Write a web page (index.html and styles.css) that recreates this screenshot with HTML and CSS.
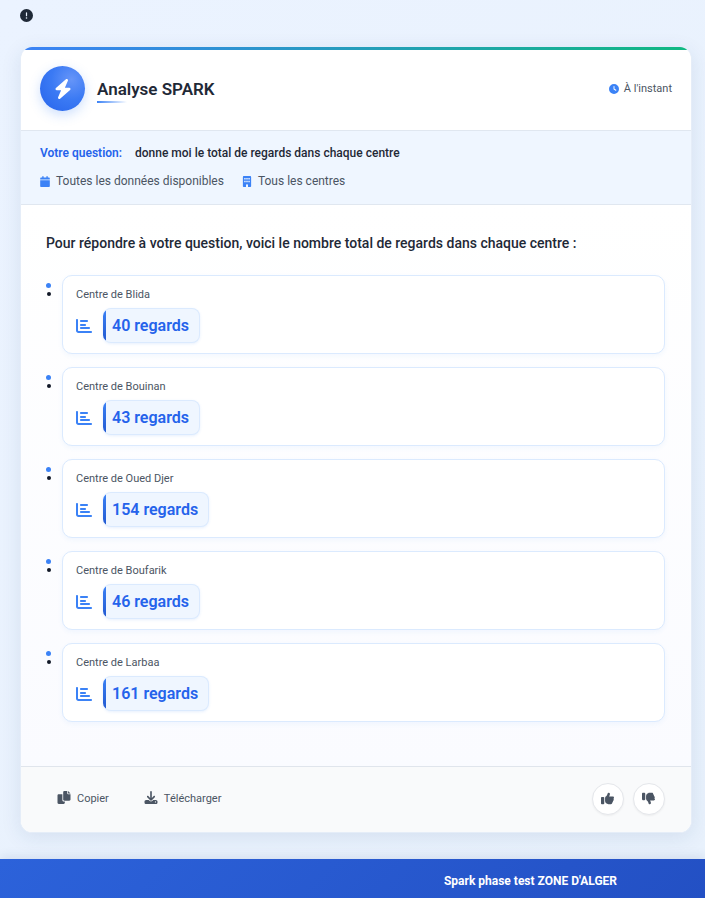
FILE: index.html
```
<!DOCTYPE html>
<html lang="fr">
<head>
<meta charset="utf-8">
<meta name="viewport" content="width=device-width, initial-scale=1">
<title>Analyse SPARK</title>
<link rel="stylesheet" href="styles.css">
</head>
<body>
<svg class="sprite" aria-hidden="true">
  <symbol id="bars" viewBox="0 0 512 512"><path d="M32 32c17.7 0 32 14.3 32 32V400c0 8.800 7.200 16 16 16H480c17.700 0 32 14.300 32 32s-14.300 32-32 32H80c-44.200 0-80-35.800-80-80V64C0 46.300 14.300 32 32 32zm96 64c0-17.700 14.300-32 32-32H352c17.700 0 32 14.300 32 32s-14.300 32-32 32H160c-17.700 0-32-14.300-32-32zm32 96H288c17.700 0 32 14.300 32 32s-14.300 32-32 32H160c-17.700 0-32-14.300-32-32s14.300-32 32-32zm0 96H416c17.700 0 32 14.300 32 32s-14.300 32-32 32H160c-17.700 0-32-14.300-32-32s14.300-32 32-32z"/></symbol>
  <symbol id="thumb" viewBox="0 0 512 512"><path d="M313.4 32.9c26 5.2 42.900 30.500 37.700 56.500l-2.300 11.400c-5.300 26.700-15.100 52.100-28.800 75.200H464c26.500 0 48 21.500 48 48c0 18.500-10.500 34.600-25.900 42.600C497 275.400 504 288.900 504 304c0 23.400-16.800 42.900-38.900 47.100c4.400 7.300 6.900 15.800 6.900 24.900c0 21.300-13.900 39.400-33.100 45.600c.7 3.300 1.100 6.800 1.100 10.400c0 26.500-21.500 48-48 48H294.500c-19 0-37.500-5.600-53.300-16.100l-38.500-25.700C176 420.400 160 390.400 160 358.300V247.100c0-29.200 13.300-56.700 36-75l7.400-5.900c26.500-21.200 44.600-51 51.200-84.200l2.300-11.400c5.200-26 30.500-42.900 56.500-37.700zM32 192H96c17.700 0 32 14.300 32 32V448c0 17.700-14.300 32-32 32H32c-17.700 0-32-14.300-32-32V224c0-17.700 14.300-32 32-32z"/></symbol>
</svg>
<main class="page">
  <div class="alert">
    <svg class="alert-icon" viewBox="0 0 512 512" role="img" aria-label="Alerte"><path d="M256 512A256 256 0 1 0 256 0a256 256 0 1 0 0 512zm0-384c13.300 0 24 10.700 24 24V264c0 13.300-10.700 24-24 24s-24-10.700-24-24V152c0-13.300 10.700-24 24-24zM224 352a32 32 0 1 1 64 0 32 32 0 1 1 -64 0z"/></svg>
  </div>
  <article class="card">
    <header class="card-header">
      <div class="brand">
        <span class="logo"><svg viewBox="0 0 448 512" aria-hidden="true"><path d="M349.400 44.600c5.900-13.700 1.500-29.700-10.600-38.500s-28.600-8-39.900 1.800l-256 224c-10 8.800-13.600 22.900-8.900 35.300S50.700 288 64 288H175.500L98.600 467.400c-5.900 13.700-1.500 29.700 10.600 38.500s28.600 8 39.900-1.800l256-224c10-8.800 13.600-22.900 8.900-35.300s-16.600-20.700-30-20.700H272.500L349.400 44.600z"/></svg></span>
        <h1 class="title">Analyse SPARK</h1>
      </div>
      <div class="time">
        <svg class="icon-sm" viewBox="0 0 512 512" aria-hidden="true"><path d="M256 0a256 256 0 1 1 0 512A256 256 0 1 1 256 0zM232 120V256c0 8 4 15.500 10.700 20l96 64c11 7.400 25.900 4.400 33.300-6.700s4.400-25.900-6.700-33.300L280 243.200V120c0-13.300-10.700-24-24-24s-24 10.700-24 24z"/></svg>
        <span>À l'instant</span>
      </div>
    </header>
    <section class="query">
      <p class="question"><strong>Votre question:</strong><span>donne moi le total de regards dans chaque centre</span></p>
      <div class="filters">
        <span class="filter"><svg viewBox="0 0 448 512" aria-hidden="true"><path d="M96 32V64H48C21.500 64 0 85.500 0 112v48H448V112c0-26.500-21.500-48-48-48H352V32c0-17.700-14.300-32-32-32s-32 14.300-32 32V64H160V32c0-17.700-14.300-32-32-32S96 14.300 96 32zM448 192H0V464c0 26.500 21.500 48 48 48H400c26.500 0 48-21.500 48-48V192z"/></svg>Toutes les données disponibles</span>
        <span class="filter"><svg viewBox="0 0 384 512" aria-hidden="true"><path fill-rule="evenodd" d="M48 0C21.500 0 0 21.500 0 48V464c0 26.500 21.500 48 48 48h96V432c0-26.500 21.500-48 48-48s48 21.500 48 48v80h96c26.500 0 48-21.500 48-48V48c0-26.500-21.500-48-48-48H48zM64 96h64v64H64zM160 96h64v64h-64zM256 96h64v64h-64zM64 224h64v64H64zM160 224h64v64h-64zM256 224h64v64h-64z"/></svg>Tous les centres</span>
      </div>
    </section>
    <section class="answer">
      <h2 class="intro">Pour répondre à votre question, voici le nombre total de regards dans chaque centre :</h2>
      <ul class="results">
        <li class="result"><span class="dots"></span><div class="box"><span class="name">Centre de Blida</span><div class="stat"><svg class="chart" aria-hidden="true"><use href="#bars"/></svg><strong class="value">40 regards</strong></div></div></li>
        <li class="result"><span class="dots"></span><div class="box"><span class="name">Centre de Bouinan</span><div class="stat"><svg class="chart" aria-hidden="true"><use href="#bars"/></svg><strong class="value">43 regards</strong></div></div></li>
        <li class="result"><span class="dots"></span><div class="box"><span class="name">Centre de Oued Djer</span><div class="stat"><svg class="chart" aria-hidden="true"><use href="#bars"/></svg><strong class="value">154 regards</strong></div></div></li>
        <li class="result"><span class="dots"></span><div class="box"><span class="name">Centre de Boufarik</span><div class="stat"><svg class="chart" aria-hidden="true"><use href="#bars"/></svg><strong class="value">46 regards</strong></div></div></li>
        <li class="result"><span class="dots"></span><div class="box"><span class="name">Centre de Larbaa</span><div class="stat"><svg class="chart" aria-hidden="true"><use href="#bars"/></svg><strong class="value">161 regards</strong></div></div></li>
      </ul>
    </section>
    <footer class="card-footer">
      <div class="actions">
        <button class="action" type="button"><svg viewBox="0 0 512 512" aria-hidden="true"><path d="M384 96V0H272c-26.500 0-48 21.500-48 48v288c0 26.500 21.500 48 48 48H464c26.500 0 48-21.500 48-48V128h-96C398.400 128 384 113.600 384 96zM416 0v96h96L416 0zM192 352V128H48c-26.500 0-48 21.500-48 48v288c0 26.500 21.500 48 48 48h192c26.500 0 48-21.500 48-48v-48h-32C220.700 416 192 387.300 192 352z"/></svg>Copier</button>
        <button class="action" type="button"><svg viewBox="0 0 512 512" aria-hidden="true"><path d="M288 32c0-17.700-14.300-32-32-32s-32 14.300-32 32V274.700l-73.400-73.400c-12.500-12.500-32.800-12.500-45.300 0s-12.500 32.800 0 45.300l128 128c12.500 12.500 32.800 12.500 45.300 0l128-128c12.500-12.500 12.500-32.800 0-45.300s-32.800-12.500-45.300 0L288 274.700V32zM64 352c-35.300 0-64 28.700-64 64v32c0 35.300 28.700 64 64 64H448c35.300 0 64-28.700 64-64V416c0-35.300-28.700-64-64-64H346.500l-45.300 45.300c-25 25-65.500 25-90.500 0L165.500 352H64zm368 56a24 24 0 1 1 0 48 24 24 0 1 1 0-48z"/></svg>Télécharger</button>
      </div>
      <div class="votes">
        <button class="vote" type="button" aria-label="Utile"><svg aria-hidden="true"><use href="#thumb"/></svg></button>
        <button class="vote vote-down" type="button" aria-label="Pas utile"><svg aria-hidden="true"><use href="#thumb"/></svg></button>
      </div>
    </footer>
  </article>
</main>
<footer class="site-footer">Spark phase test ZONE D'ALGER</footer>
</body>
</html>
```
FILE: styles.css
```
* { box-sizing: border-box; }

body {
  margin: 0;
  min-height: 100vh;
  display: flex;
  flex-direction: column;
  font-family: Roboto, "Liberation Sans", sans-serif;
  font-size: 12px;
  line-height: 16px;
  color: #1f2937;
  background: linear-gradient(135deg, #ebf3ff, #e8f1fc);
}

h1, h2, p, ul { margin: 0; padding: 0; }
svg { display: block; flex: none; fill: currentColor; }
button { font: inherit; color: inherit; cursor: pointer; }

.sprite { position: absolute; width: 0; height: 0; }

.page { flex: 1; padding: 9px 13px 26px 20px; }
.alert { height: 38px; }
.alert-icon { width: 13px; height: 13px; }

.card {
  overflow: hidden;
  border: 1px solid #e5edf8;
  border-top: 0;
  border-radius: 12px;
  background: #fff;
  box-shadow: 0 4px 20px rgba(30, 64, 120, 0.1);
}
.card::before {
  content: "";
  display: block;
  height: 3px;
  background: linear-gradient(90deg, #3b82f6, #10b981);
}

.card-header {
  display: flex;
  align-items: center;
  justify-content: space-between;
  padding: 16px 19px 19px;
  border-bottom: 1px solid #e0e7f0;
}
.brand { display: flex; align-items: center; gap: 12px; }
.logo {
  display: grid;
  place-items: center;
  width: 45px;
  height: 45px;
  border-radius: 50%;
  color: #fff;
  background: radial-gradient(circle at 70% 30%, #6695f8, #3b7af4 45%, #2563eb);
  box-shadow: 0 4px 12px rgba(59, 130, 246, 0.25);
}
.logo svg { width: 18px; height: 20px; }
.title {
  position: relative;
  font-size: 17px;
  line-height: 28px;
  font-weight: 600;
}
.title::after {
  content: "";
  position: absolute;
  left: 0;
  bottom: 0;
  width: 30px;
  height: 2px;
  background: linear-gradient(90deg, #3b82f6, transparent);
}
.time { display: flex; align-items: center; gap: 5px; font-size: 11px; color: #4b5563; }
.icon-sm { width: 10px; height: 10px; color: #3b82f6; }

.query {
  padding: 14px 19px 15px;
  background: #eff6ff;
  border-bottom: 1px solid #e0e7f0;
}
.question { display: flex; gap: 13px; font-weight: 500; }
.question strong { font-weight: 600; color: #2563eb; }
.filters { display: flex; gap: 18px; margin-top: 12px; color: #4b5563; }
.filter { display: flex; align-items: center; gap: 6px; }
.filter svg { height: 11px; width: 10px; color: #3b82f6; }

.answer {
  padding: 27px 26px 44px 25px;
  background: linear-gradient(180deg, #fff, #fafbff);
}
.intro { font-size: 14px; line-height: 22px; font-weight: 500; }
.results { list-style: none; display: grid; gap: 13px; margin-top: 21px; }
.result { display: flex; gap: 11px; }
.dots { width: 5px; padding-top: 8px; }
.dots::before,
.dots::after { content: ""; display: block; border-radius: 50%; }
.dots::before { width: 5px; height: 5px; background: #3b82f6; }
.dots::after { width: 4px; height: 4px; margin: 4px 0 0 1px; background: #111827; }
.box {
  flex: 1;
  padding: 11px 13px 10px;
  border: 1px solid #dbeafe;
  border-radius: 10px;
  background: #fff;
  box-shadow: 0 2px 5px rgba(59, 130, 246, 0.06);
}
.name { display: block; font-size: 11px; line-height: 16px; color: #4b5563; }
.stat { display: flex; align-items: center; gap: 11px; margin-top: 5px; }
.chart { width: 16px; height: 16px; color: #3b82f6; }
.value {
  position: relative;
  overflow: hidden;
  padding: 5px 10px 5px 9px;
  border: 1px solid #dbeafe;
  border-left: 0;
  border-radius: 8px;
  font-size: 16px;
  line-height: 23px;
  font-weight: 600;
  color: #2563eb;
  background: #eff6ff;
  box-shadow: 0 1px 3px rgba(59, 130, 246, 0.12);
}
.value::before {
  content: "";
  position: absolute;
  inset: 0 auto 0 0;
  width: 3px;
  background: linear-gradient(180deg, #3b82f6, #2158d0);
}

.card-footer {
  display: flex;
  align-items: center;
  justify-content: space-between;
  padding: 16px 26px 17px 36px;
  border-top: 1px solid #e0e5ec;
  background: #f9fafb;
  color: #4b5563;
}
.actions { display: flex; gap: 35px; }
.action {
  display: flex;
  align-items: flex-start;
  gap: 6px;
  padding: 0;
  border: 0;
  background: none;
  font-size: 11px;
}
.action svg { width: 14px; height: 13px; }
.votes { display: flex; gap: 9px; }
.vote {
  display: grid;
  place-items: center;
  width: 32px;
  height: 32px;
  padding: 0 1px 2px 0;
  border: 1px solid #e5e7eb;
  border-radius: 50%;
  background: #fff;
  box-shadow: 0 1px 2px rgba(0, 0, 0, 0.05);
}
.vote svg { width: 13px; height: 13px; }
.vote-down svg { transform: scaleY(-1); }

.site-footer {
  padding: 14px 88px 9px 20px;
  text-align: right;
  font-weight: 700;
  color: #fff;
  background: linear-gradient(135deg, #2c62da, #2350c4);
  box-shadow: 0 -2px 10px rgba(30, 64, 120, 0.12);
}
```
